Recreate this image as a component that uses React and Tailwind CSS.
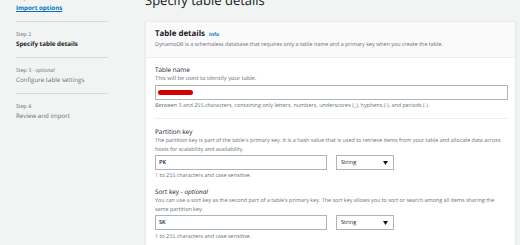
import React from "react";

const NavStep = ({ step, optional, title, current, first }) => (
  <div className={`pt-[7px] pb-[8px] ${first ? "" : "border-t border-[#d5dbdb]"}`}>
    <div className="h-[10px] leading-[10px] text-[5.2px] text-[#687078]">
      {step}
      {optional && <i> - optional</i>}
    </div>
    <div
      className={`h-[10px] leading-[10px] text-[6.2px] whitespace-nowrap ${
        current ? "font-bold text-[#16191f]" : "text-[#687078]"
      }`}
    >
      {title}
    </div>
  </div>
);

const SelectBox = () => (
  <div className="w-[58px] h-[15px] border border-[#aab7b8] bg-white flex items-center justify-between pl-[4px] pr-[5px] text-[5.6px] text-[#16191f]">
    <span>String</span>
    <svg width="5" height="4" viewBox="0 0 5 4">
      <path d="M0 0 L5 0 L2.5 4 Z" fill="#16191f" />
    </svg>
  </div>
);

const KeyField = ({ value }) => (
  <div className="flex gap-[9px]">
    <div className="w-[172px] h-[15px] border border-[#aab7b8] bg-white flex items-center px-[3px] text-[5.6px] font-semibold text-[#16191f]">
      {value}
    </div>
    <SelectBox />
  </div>
);

export default function App() {
  return (
    <div className="w-[520px] h-[245px] overflow-hidden bg-[#f2f3f3] flex font-['Open_Sans',sans-serif] [text-rendering:geometricPrecision]">
      {/* navegacion lateral */}
      <div className="w-[145px] shrink-0 pl-[16px]">
        <div className="w-[92px] mt-[-14px]">
          <div className="pt-[7px] pb-[8px]">
            <div className="h-[10px] leading-[10px] text-[5.2px] text-[#687078]">Step 1</div>
            <div className="h-[10px] leading-[10px] text-[6.2px] font-bold text-[#0073bb] underline">
              Import options
            </div>
          </div>
          <NavStep step="Step 2" title="Specify table details" current />
          <NavStep step="Step 3" optional title="Configure table settings" />
          <NavStep step="Step 4" title="Review and import" />
        </div>
      </div>

      {/* contenido */}
      <div className="w-[371px] shrink-0 flex flex-col mt-[-6px]">
        <div className="h-[14px] leading-[13px] text-[13px] text-[#16191f] mb-[14px] whitespace-nowrap">
          Specify table details
        </div>

        <div className="border border-[#eaeded] bg-white shadow-[0_1px_1px_rgba(0,28,36,0.15)]">
          <div className="bg-[#fafafa] border-b border-[#eaeded] pl-[9px] pr-[8px] pt-[7px] pb-[8px]">
            <div className="h-[10px] leading-[10px] flex items-baseline gap-[4px]">
              <span className="text-[7.9px] font-bold text-[#16191f]">Table details</span>
              <span className="text-[5px] font-bold text-[#0073bb]">Info</span>
            </div>
            <div className="h-[10px] leading-[10px] text-[5.4px] text-[#687078] whitespace-nowrap">
              DynamoDB is a schemaless database that requires only a table name and a primary key when you create the table.
            </div>
          </div>

          <div className="pl-[9px] pr-[7px] pt-[7px] pb-[20px]">
            <div className="h-[9px] leading-[9px] text-[6.4px] font-medium text-[#16191f]">Table name</div>
            <div className="h-[9px] leading-[9px] text-[5.7px] text-[#687078]">
              This will be used to identify your table.
            </div>
            <div className="mt-[2px] h-[15px] border border-[#aab7b8] bg-white flex items-center px-[2px]">
              <span className="block w-[35px] h-[5px] rounded-full bg-[#d40000]" />
            </div>
            <div className="mt-[1px] h-[8px] leading-[8px] text-[5.45px] text-[#687078] whitespace-nowrap">
              Between 3 and 255 characters, containing only letters, numbers, underscores (_), hyphens (-), and periods (.).
            </div>

            <div className="mt-[9px] border-t border-[#eaeded]" />

            <div className="mt-[8px] h-[9px] leading-[9px] text-[6.4px] font-medium text-[#16191f]">Partition key</div>
            <div className="leading-[9px] text-[5.42px] text-[#687078]">
              <div className="whitespace-nowrap">
                The partition key is part of the table's primary key. It is a hash value that is used to retrieve items from your table and allocate data across
              </div>
              <div>hosts for scalability and availability.</div>
            </div>
            <div className="mt-[1px]">
              <KeyField value="PK" />
            </div>
            <div className="mt-[1px] h-[8px] leading-[8px] text-[5.4px] text-[#687078]">
              1 to 255 characters and case sensitive.
            </div>

            <div className="mt-[8px] h-[9px] leading-[9px] text-[6.4px] font-medium text-[#16191f]">
              Sort key - <i>optional</i>
            </div>
            <div className="leading-[9px] text-[5.42px] text-[#687078]">
              <div className="whitespace-nowrap">
                You can use a sort key as the second part of a table's primary key. The sort key allows you to sort or search among all items sharing the
              </div>
              <div>same partition key.</div>
            </div>
            <div className="mt-[1px]">
              <KeyField value="SK" />
            </div>
            <div className="mt-[2px] h-[8px] leading-[8px] text-[5.4px] text-[#687078]">
              1 to 255 characters and case sensitive.
            </div>
          </div>
        </div>
      </div>
    </div>
  );
}
